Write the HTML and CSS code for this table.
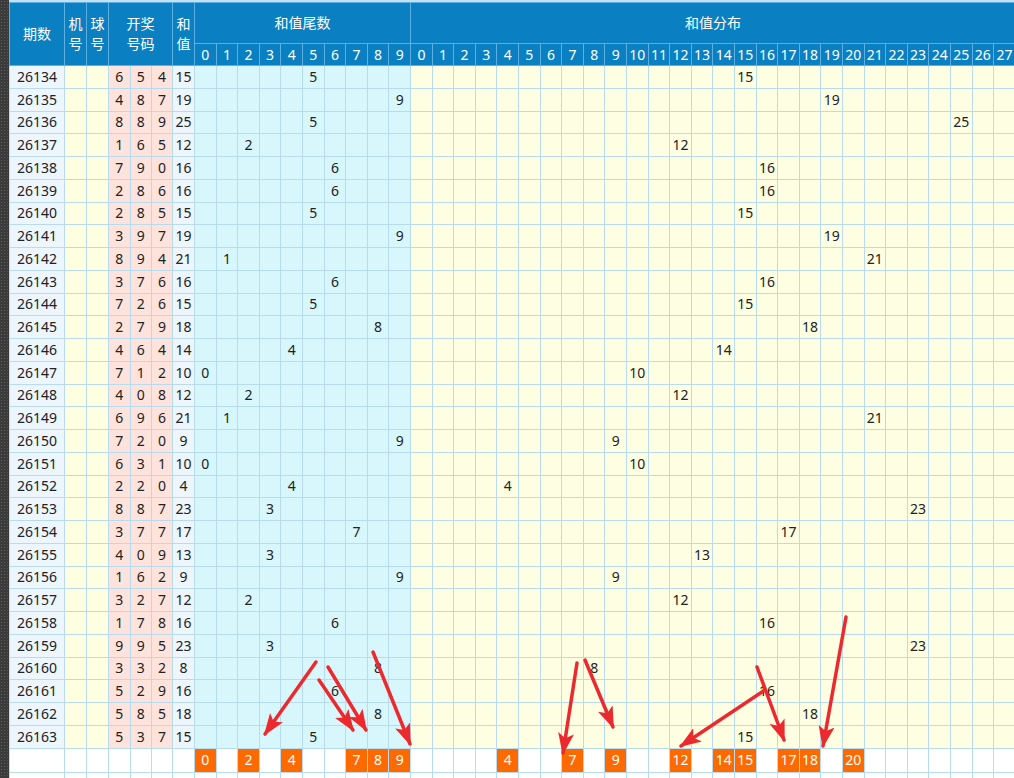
FILE: index.html
```html
<!DOCTYPE html>
<html lang="zh-CN">
<head>
<meta charset="utf-8">
<title>和值走势</title>
<link rel="stylesheet" href="styles.css">
</head>
<body>
<div class="page">
  <div class="strip"></div>
  <div class="sheet">
    <table class="chart">
      <colgroup>
        <col class="w-qi"><col class="w-s"><col class="w-s"><col class="w-k"><col class="w-k"><col class="w-k2"><col class="w-s">
        <col span="10" class="w-n"><col span="28" class="w-n">
      </colgroup>
      <thead>
        <tr class="h1">
          <th rowspan="2" class="t-big">期数</th>
          <th rowspan="2" class="t-stack">机<br>号</th>
          <th rowspan="2" class="t-stack">球<br>号</th>
          <th rowspan="2" colspan="3" class="t-stack">开奖<br>号码</th>
          <th rowspan="2" class="t-stack">和<br>值</th>
          <th colspan="10" class="t-big">和值尾数</th>
          <th colspan="28" class="t-big">和值分布</th>
        </tr>
        <tr class="h2">
          <th>0</th><th>1</th><th>2</th><th>3</th><th>4</th><th>5</th><th>6</th><th>7</th><th>8</th><th>9</th>
          <th>0</th><th>1</th><th>2</th><th>3</th><th>4</th><th>5</th><th>6</th><th>7</th><th>8</th><th>9</th><th>10</th><th>11</th><th>12</th><th>13</th><th>14</th><th>15</th><th>16</th><th>17</th><th>18</th><th>19</th><th>20</th><th>21</th><th>22</th><th>23</th><th>24</th><th>25</th><th>26</th><th>27</th>
        </tr>
      </thead>
      <tbody id="rows"></tbody>
    </table>
  </div>
  <svg class="marks" width="1014" height="778" viewBox="0 0 1014 778">
    <defs>
      <marker id="ah" markerWidth="22" markerHeight="16" refX="20" refY="8" orient="auto" markerUnits="userSpaceOnUse">
        <path d="M0,0 L22,8 L0,16 L5,8 Z" fill="#ec2a2e"/>
      </marker>
    </defs>
    <g stroke="#ec2a2e" stroke-width="3.5" marker-end="url(#ah)" stroke-linecap="round">
      <line x1="316" y1="662" x2="265" y2="734"/>
      <line x1="328" y1="667" x2="366" y2="730"/>
      <line x1="319" y1="680" x2="353" y2="730"/>
      <line x1="373" y1="652" x2="410" y2="744"/>
      <line x1="577" y1="663" x2="563" y2="753"/>
      <line x1="585" y1="660" x2="613" y2="727"/>
      <line x1="765" y1="690" x2="681" y2="746"/>
      <line x1="757" y1="667" x2="784" y2="740"/>
      <line x1="846" y1="617" x2="823" y2="746"/>
    </g>
  </svg>
</div>
<script src="script.js"></script>
</body>
</html>
```

FILE: styles.css
```css
* { box-sizing: border-box; }
html, body { margin: 0; padding: 0; height: 100%; overflow: hidden; }
body {
  font-family: "Noto Sans", "Noto Sans CJK SC", sans-serif;
  background: #ffffff;
  color: #222;
}
.page {
  position: relative;
  display: flex;
  height: 778px;
  width: 1014px;
  overflow: hidden;
}
.strip {
  flex: none;
  width: 9px;
  background-color: #3b3b3b;
  background-image: radial-gradient(#5a5a5a 0.7px, transparent 0.9px);
  background-size: 3px 3px;
}
.sheet {
  flex: none;
  border-top: 2px solid #c2e1f5;
}
.chart {
  border-collapse: collapse;
  table-layout: fixed;
  width: 1006px;
}
.w-qi { width: 55px; }
.w-s { width: 22px; }
.w-k { width: 21.5px; }
.w-k2 { width: 21px; }
.w-n { width: 21.6px; }

.chart th, .chart td {
  padding: 0;
  border: 1px solid #b9dbef;
  text-align: center;
  font-size: 14px;
  white-space: nowrap;
  overflow: hidden;
  line-height: 20px;
}
.chart th {
  background: #0a80c2;
  color: #fff;
  border-color: #5db1e2;
  font-weight: 400;
}
.h1 th { height: 41px; }
.h2 th { height: 22px; font-size: 14px; }
.t-big { font-weight: 600; font-size: 14px; }
.t-stack { font-weight: 600; line-height: 23px; }

.chart td { height: 22.75px; color: #222; }
.c-qi { background: #edf5fd; }
.c-ye { background: #fefee1; }
.c-pk { background: #fde3db; }
.c-hz { background: #edf5fd; }
.c-tl { background: #d7f7fd; }
.c-ds { background: #fefee2; }
.c-hz { text-align: left; padding-left: 2px; }
.foot td { background: #ffffff; height: 24px; }
.foot td.hit { background: #ff6a00; color: #fff; }

.marks {
  position: absolute;
  left: 0;
  top: 0;
  pointer-events: none;
}
```

FILE: script.js
```js
var draws = [
  ["26134","654"],["26135","487"],["26136","889"],["26137","165"],["26138","790"],
  ["26139","286"],["26140","285"],["26141","397"],["26142","894"],["26143","376"],
  ["26144","726"],["26145","279"],["26146","464"],["26147","712"],["26148","408"],
  ["26149","696"],["26150","720"],["26151","631"],["26152","220"],["26153","887"],
  ["26154","377"],["26155","409"],["26156","162"],["26157","327"],["26158","178"],
  ["26159","995"],["26160","332"],["26161","529"],["26162","585"],["26163","537"]
];
var body = document.getElementById("rows");
function cell(tr, cls, text) {
  var td = document.createElement("td");
  if (cls) td.className = cls;
  if (text !== undefined && text !== null) td.textContent = text;
  tr.appendChild(td);
  return td;
}
draws.forEach(function (d) {
  var tr = document.createElement("tr");
  var n = d[1].split("").map(Number);
  var sum = n[0] + n[1] + n[2];
  cell(tr, "c-qi", d[0]);
  cell(tr, "c-ye");
  cell(tr, "c-ye");
  n.forEach(function (x) { cell(tr, "c-pk", x); });
  cell(tr, "c-hz", sum);
  for (var i = 0; i < 10; i++) cell(tr, "c-tl", i === sum % 10 ? i : null);
  for (var j = 0; j < 28; j++) cell(tr, "c-ds", j === sum ? j : null);
  body.appendChild(tr);
});
var tailHits = [0, 2, 4, 7, 8, 9];
var distHits = [4, 7, 9, 12, 14, 15, 17, 18, 20];
for (var r = 0; r < 2; r++) {
  var tr = document.createElement("tr");
  tr.className = "foot";
  for (var k = 0; k < 7; k++) cell(tr, "");
  for (var a = 0; a < 10; a++) {
    if (r === 0 && tailHits.indexOf(a) >= 0) cell(tr, "hit", a); else cell(tr, "");
  }
  for (var b = 0; b < 28; b++) {
    if (r === 0 && distHits.indexOf(b) >= 0) cell(tr, "hit", b); else cell(tr, "");
  }
  body.appendChild(tr);
}
```
